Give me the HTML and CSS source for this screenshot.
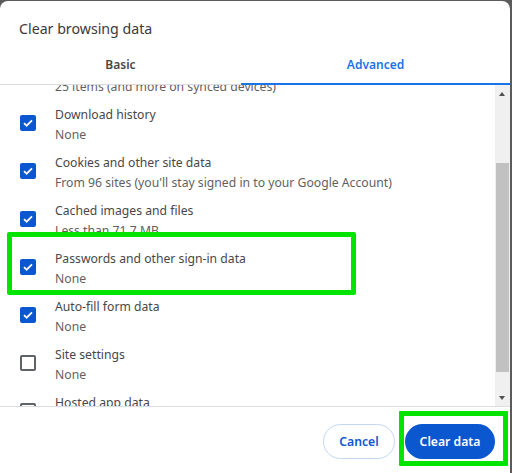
FILE: index.html
```html
<!DOCTYPE html>
<html>
<head>
<meta charset="utf-8">
<link rel="stylesheet" href="styles.css">
</head>
<body>
<div class="dialog">
  <div class="title">Clear browsing data</div>
  <div class="tabs">
    <div class="tab">Basic</div>
    <div class="tab active">Advanced</div>
  </div>
  <div class="body">
    <div class="list">
      <div class="list-inner">
        <div class="row">
          <span class="cb checked"><svg viewBox="0 0 16 16"><path d="M4 8.2l2.6 2.5L12 5.4"/></svg></span>
          <div class="txt"><div class="l1">Browsing history</div><div class="l2">25 items (and more on synced devices)</div></div>
        </div>
        <div class="row">
          <span class="cb checked"><svg viewBox="0 0 16 16"><path d="M4 8.2l2.6 2.5L12 5.4"/></svg></span>
          <div class="txt"><div class="l1">Download history</div><div class="l2">None</div></div>
        </div>
        <div class="row">
          <span class="cb checked"><svg viewBox="0 0 16 16"><path d="M4 8.2l2.6 2.5L12 5.4"/></svg></span>
          <div class="txt"><div class="l1">Cookies and other site data</div><div class="l2">From 96 sites (you'll stay signed in to your Google Account)</div></div>
        </div>
        <div class="row">
          <span class="cb checked"><svg viewBox="0 0 16 16"><path d="M4 8.2l2.6 2.5L12 5.4"/></svg></span>
          <div class="txt"><div class="l1">Cached images and files</div><div class="l2">Less than 71.7 MB</div></div>
        </div>
        <div class="row">
          <span class="cb checked"><svg viewBox="0 0 16 16"><path d="M4 8.2l2.6 2.5L12 5.4"/></svg></span>
          <div class="txt"><div class="l1">Passwords and other sign-in data</div><div class="l2">None</div></div>
          <div class="hl hl-row"></div>
        </div>
        <div class="row">
          <span class="cb checked"><svg viewBox="0 0 16 16"><path d="M4 8.2l2.6 2.5L12 5.4"/></svg></span>
          <div class="txt"><div class="l1">Auto-fill form data</div><div class="l2">None</div></div>
        </div>
        <div class="row">
          <span class="cb"></span>
          <div class="txt"><div class="l1">Site settings</div><div class="l2">None</div></div>
        </div>
        <div class="row">
          <span class="cb"></span>
          <div class="txt"><div class="l1">Hosted app data</div><div class="l2">5 sites</div></div>
        </div>
      </div>
    </div>
    <div class="scrollbar">
      <div class="arrow up"></div>
      <div class="track"><div class="thumb"></div></div>
      <div class="arrow down"></div>
    </div>
  </div>
  <div class="footer">
    <button class="btn cancel">Cancel</button>
    <div class="clear-wrap">
      <button class="btn primary">Clear data</button>
      <div class="hl hl-btn"></div>
    </div>
  </div>
</div>
</body>
</html>
```
FILE: styles.css
```css
html, body {
  margin: 0;
  padding: 0;
}
body {
  background: #5b5b5b;
  width: 512px;
  height: 473px;
  overflow: hidden;
  font-family: "Noto Sans", "Open Sans", sans-serif;
}
.dialog {
  margin-top: 1px;
  width: 510px;
  height: 472px;
  background: #fff;
  border-radius: 8px 8px 0 0;
  display: flex;
  flex-direction: column;
  overflow: hidden;
}
.title {
  padding: 18px 0 0 19px;
  height: 34px;
  font-size: 14.2px;
  line-height: 20px;
  color: #3a3a3a;
}
.tabs {
  display: grid;
  grid-template-columns: 241px 1fr;
  height: 32px;
  border-bottom: 1px solid #dadce0;
  box-sizing: border-box;
}
.tab {
  text-align: center;
  font-size: 12px;
  font-weight: 600;
  color: #474747;
  line-height: 20px;
  padding-top: 2px;
  box-sizing: border-box;
}
.tab.active {
  color: #1a73e8;
  border-bottom: 2px solid #1a73e8;
  margin-bottom: -1px;
}
.body {
  display: flex;
  height: 321px;
  border-bottom: 1px solid #dadce0;
}
.list {
  flex: 1;
  overflow: hidden;
}
.list-inner {
  margin-top: -32px;
}
.row {
  position: relative;
  display: flex;
  align-items: flex-start;
  height: 48px;
  padding-left: 20px;
  box-sizing: border-box;
}
.cb {
  width: 16px;
  height: 16px;
  margin-top: 14px;
  margin-right: 19px;
  box-sizing: border-box;
  border: 2px solid #5f6368;
  border-radius: 2px;
  flex: none;
}
.cb.checked {
  background: #0b57d0;
  border-color: #0b57d0;
}
.cb svg {
  display: block;
  width: 16px;
  height: 16px;
  margin: -2px;
}
.cb svg path {
  fill: none;
  stroke: #fff;
  stroke-width: 1.8;
}
.txt {
  padding-top: 4px;
  font-size: 12.2px;
  line-height: 20px;
}
.l1 { color: #474747; }
.l2 { color: #5f5f5f; }
.hl {
  position: absolute;
  border: 5px solid #00e400;
  border-radius: 2px;
  box-sizing: border-box;
}
.hl-row {
  left: 7px;
  top: -13px;
  width: 349px;
  height: 63px;
}
.scrollbar {
  width: 15px;
  background: #f0f0f0;
  display: flex;
  flex-direction: column;
}
.arrow {
  height: 17px;
  position: relative;
}
.arrow::after {
  content: "";
  position: absolute;
  left: 4px;
  border-left: 3.5px solid transparent;
  border-right: 3.5px solid transparent;
}
.arrow.up::after {
  top: 7px;
  border-bottom: 4px solid #505050;
}
.arrow.down::after {
  top: 7px;
  border-top: 4px solid #505050;
}
.track {
  flex: 1;
  padding-top: 61px;
  padding-bottom: 17px;
}
.thumb {
  margin-left: 1px;
  width: 13px;
  height: 209px;
  background: #c1c1c1;
}
.footer {
  display: flex;
  justify-content: flex-end;
  align-items: flex-start;
  padding: 17px 15px 0 0;
  gap: 10px;
}
.btn {
  height: 35px;
  border-radius: 18px;
  font-family: inherit;
  font-size: 12.2px;
  font-weight: 600;
  padding: 0;
  cursor: pointer;
}
.cancel {
  width: 72px;
  background: #fff;
  color: #0b57d0;
  border: 1px solid #c4d7f5;
}
.clear-wrap {
  position: relative;
}
.primary {
  display: block;
  width: 90px;
  background: #0b57d0;
  color: #fff;
  border: none;
}
.hl-btn {
  left: -6px;
  top: -13px;
  width: 109px;
  height: 55px;
  border-radius: 1px;
}
```
